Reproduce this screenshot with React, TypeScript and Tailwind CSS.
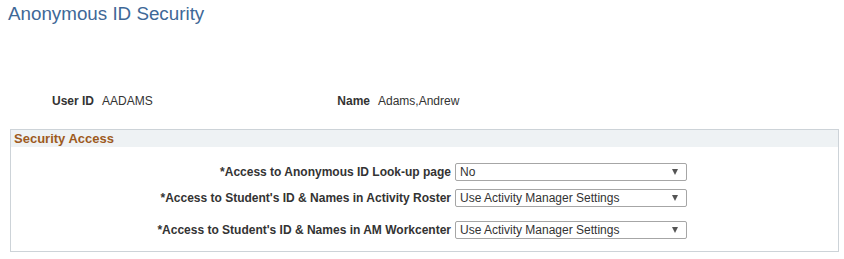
const rows = [
  { label: "*Access to Anonymous ID Look-up page", value: "No", mt: "mt-0" },
  { label: "*Access to Student's ID & Names in Activity Roster", value: "Use Activity Manager Settings", mt: "mt-[8px]" },
  { label: "*Access to Student's ID & Names in AM Workcenter", value: "Use Activity Manager Settings", mt: "mt-[14px]" },
]

function Select({ value }: { value: string }) {
  return (
    <div className="w-[232px] h-[18px] border border-[#a6a6a6] bg-white flex items-center justify-between pl-[4px] pr-[8px] rounded-[2px]">
      <span className="text-[12px] text-[#333] leading-none">{value}</span>
      <span className="w-0 h-0 border-l-[3.5px] border-r-[3.5px] border-t-[6px] border-l-transparent border-r-transparent border-t-[#555]" />
    </div>
  )
}

export default function App() {
  return (
    <div className="w-[844px] h-[259px] bg-white font-['Liberation_Sans',Arial,sans-serif]">
      <h1 className="pl-[8px] pt-[3px] text-[18.8px] leading-[22px] text-[#3e6897]">Anonymous ID Security</h1>

      {/* Header fields */}
      <div className="flex items-center mt-[69px] h-[14px]">
        <span className="w-[94px] text-right text-[12px] font-bold text-[#333]">User ID</span>
        <span className="ml-[8px] w-[152px] text-[12px] text-[#333]">AADAMS</span>
        <span className="w-[116px] text-right text-[12px] font-bold text-[#333]">Name</span>
        <span className="ml-[8px] text-[12px] text-[#333]">Adams,Andrew</span>
      </div>

      {/* Security Access group box */}
      <div className="ml-[10px] mt-[21px] w-[829px] h-[123px] border border-[#cdd3d8]">
        <div className="h-[17px] bg-[#eef2f4] flex items-center pl-[3px]">
          <span className="text-[13px] font-bold text-[#9d5a1d]">Security Access</span>
        </div>
        <div className="pt-[16px]">
          {rows.map((r) => (
            <div key={r.label} className={`flex items-center ${r.mt}`}>
              <span className="w-[442px] text-right text-[12px] font-bold text-[#333] pr-[2px]">{r.label}</span>
              <span className="ml-[2px]"><Select value={r.value} /></span>
            </div>
          ))}
        </div>
      </div>
    </div>
  )
}
